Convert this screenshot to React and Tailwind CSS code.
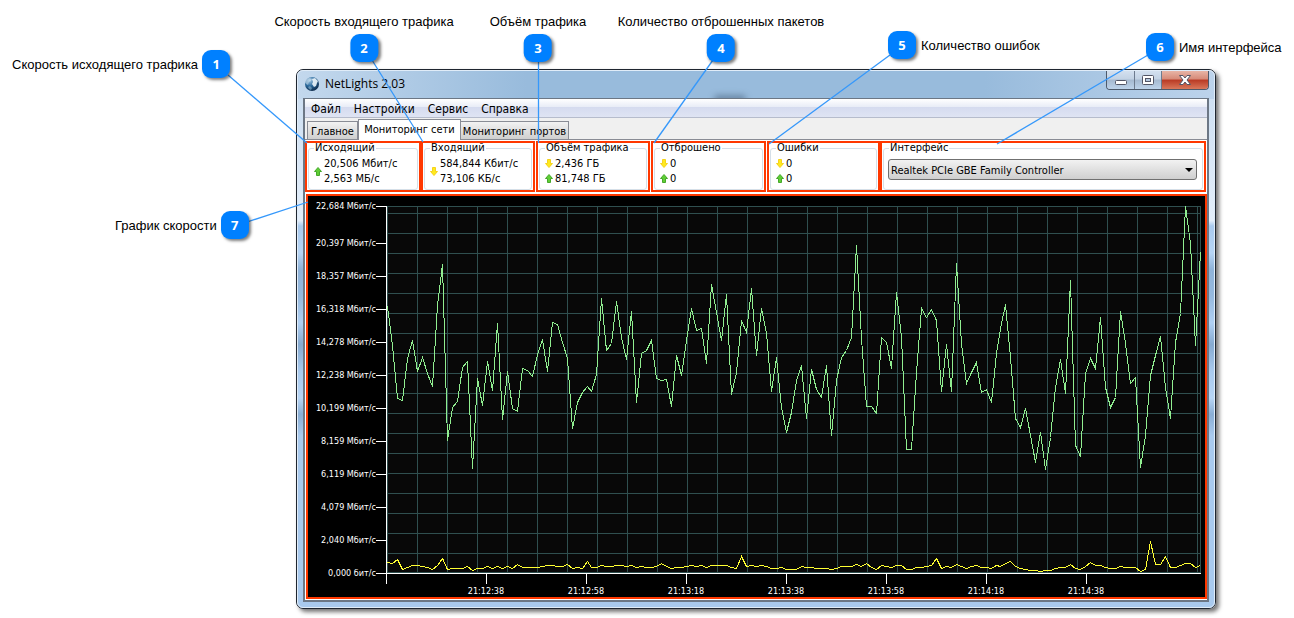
import React from "react";

const outgoing = [
  306, 345, 398, 400, 358, 340, 371, 357, 373, 386, 305, 264, 440, 407, 401, 367, 361, 468, 378, 405,
  361, 390, 323, 419, 371, 408, 411, 368, 370, 376, 354, 339, 371, 322, 324, 342, 358, 428, 402, 392,
  386, 391, 374, 298, 350, 343, 301, 337, 359, 311, 402, 353, 350, 340, 378, 380, 379, 406, 355, 375,
  340, 308, 330, 328, 363, 284, 312, 340, 294, 394, 372, 320, 332, 288, 355, 308, 333, 391, 357, 407,
  432, 412, 380, 365, 418, 369, 389, 397, 365, 435, 380, 357, 350, 337, 245, 338, 406, 406, 413, 337,
  342, 368, 292, 337, 449, 449, 372, 308, 317, 309, 320, 391, 344, 391, 263, 343, 383, 372, 362, 392,
  389, 402, 353, 328, 304, 357, 418, 427, 408, 435, 462, 432, 469, 437, 387, 359, 393, 280, 445, 456,
  373, 358, 368, 317, 387, 407, 397, 311, 343, 383, 377, 467, 435, 375, 355, 336, 387, 418, 342, 313,
  206, 243, 345, 252,
];

const incoming = [
  562, 563, 559, 569, 567, 565, 565, 566, 567, 569, 565, 558, 569, 568, 568, 568, 566, 570, 568, 568,
  566, 568, 566, 568, 566, 568, 564, 567, 567, 567, 567, 566, 565, 565, 566, 566, 564, 568, 567, 568,
  561, 567, 567, 565, 566, 566, 565, 565, 566, 565, 567, 566, 567, 567, 566, 563, 566, 568, 567, 567,
  566, 565, 566, 565, 567, 565, 565, 565, 565, 567, 568, 556, 566, 565, 566, 565, 566, 568, 568, 567,
  569, 569, 569, 566, 567, 567, 568, 568, 568, 569, 568, 566, 566, 566, 564, 566, 563, 567, 569, 565,
  566, 567, 565, 565, 569, 569, 567, 567, 566, 565, 558, 568, 566, 567, 564, 566, 568, 566, 565, 567,
  567, 568, 565, 566, 563, 561, 566, 568, 569, 570, 570, 571, 570, 570, 568, 567, 567, 564, 568, 569,
  566, 562, 565, 565, 567, 568, 568, 566, 567, 567, 567, 571, 569, 541, 564, 564, 556, 567, 567, 565,
  563, 563, 567, 565,
];

const speedTicks = [
  [206, "22,684 Мбит/с"],
  [243, "20,397 Мбит/с"],
  [276, "18,357 Мбит/с"],
  [309, "16,318 Мбит/с"],
  [342, "14,278 Мбит/с"],
  [375, "12,238 Мбит/с"],
  [408, "10,199 Мбит/с"],
  [441, "8,159 Мбит/с"],
  [474, "6,119 Мбит/с"],
  [507, "4,079 Мбит/с"],
  [540, "2,040 Мбит/с"],
  [573, "0,000 бит/с"],
];

const timeTicks = ["21:12:38", "21:12:58", "21:13:18", "21:13:38", "21:13:58", "21:14:18", "21:14:38"];

const toPoints = (values) =>
  values.map((y, i) => `${387 + Math.round((i * 813) / (values.length - 1))},${y}`).join(" ");

const Arrow = ({ up }) => (
  <svg width="8" height="9" viewBox="0 0 8 9" className={up ? "" : "rotate-180"}>
    <path
      d="M4 .5 7.5 4.5H5.5V8.5H2.5V4.5H.5Z"
      fill={up ? "#5fcf35" : "#ffea1c"}
      stroke={up ? "#46a82a" : "#f5d21c"}
      strokeWidth="1"
    />
  </svg>
);

const Globe = () => (
  <svg width="16" height="16" viewBox="0 0 16 16">
    <defs>
      <radialGradient id="globe" cx="0.35" cy="0.25" r="0.8">
        <stop offset="0" stopColor="#9fc4e0" />
        <stop offset="0.5" stopColor="#2b6a9d" />
        <stop offset="1" stopColor="#0c2746" />
      </radialGradient>
    </defs>
    <circle cx="8" cy="8" r="7" fill="url(#globe)" />
    <path d="M2 4 5 2 8 3 7 5 5 6 4 9 2 8 1 6Z" fill="#d9e9f3" opacity=".5" />
    <path d="M8 3 11 2 14 5 13 7 12 10 10 11 8 8 9 6Z" fill="#eef6fb" opacity=".9" />
    <path d="M4 11 6 10 8 12 7 14 5 13Z" fill="#8db7d3" opacity=".6" />
  </svg>
);

const Group = ({ title, className = "", children }) => (
  <div className={`border-2 border-[#ff3800] px-px ${className}`}>
    <fieldset className="h-full min-w-0 rounded-[3px] border border-[#d5dfe8] px-[5px]">
      <legend className="px-px leading-[10px]">{title}</legend>
      {children}
    </fieldset>
  </div>
);

const Speed = ({ up, bits, bytes }) => (
  <div className="flex items-center gap-[2px] pt-[3px] leading-[15px]">
    <Arrow up={up} />
    <div>
      <p>{bits}</p>
      <p>{bytes}</p>
    </div>
  </div>
);

const Counter = ({ down, up }) => (
  <div className="pt-[3px] leading-[15px]">
    <p className="flex items-center gap-[2px]">
      <Arrow /> {down}
    </p>
    <p className="flex items-center gap-[2px]">
      <Arrow up /> {up}
    </p>
  </div>
);

const Chart = () => (
  <svg viewBox="308 196 897 401" className="block w-full bg-black" shapeRendering="crispEdges">
    <rect x="387" y="206" width="814" height="367" fill="#080808" />
    <g stroke="#2f4f4f">
      {Array.from({ length: 27 }, (_, i) => (
        <line key={i} x1={417.5 + i * 30} x2={417.5 + i * 30} y1="206" y2="573" />
      ))}
      {Array.from({ length: 18 }, (_, i) => (
        <line key={i} x1="387" x2="1201" y1={213.5 + i * 20} y2={213.5 + i * 20} />
      ))}
      <rect x="387.5" y="206.5" width="813" height="366" fill="none" />
    </g>
    <g fill="none" transform="translate(.5 .5)">
      <polyline points={toPoints(outgoing)} stroke="#90ee90" />
      <polyline points={toPoints(incoming)} stroke="#ffff32" />
    </g>
    <g stroke="#fff">
      <line x1="386.5" x2="386.5" y1="206" y2="584" />
      <line x1="386" x2="1201" y1="573.5" y2="573.5" />
      {speedTicks.map(([y]) => (
        <line key={y} x1="376" x2="387" y1={y + 0.5} y2={y + 0.5} />
      ))}
      {timeTicks.map((t, i) => (
        <line key={t} x1={486.5 + i * 100} x2={486.5 + i * 100} y1="574" y2="584" />
      ))}
    </g>
    <g fill="#fff" className="text-[9px] font-['DejaVu_Sans_Condensed','DejaVu_Sans',sans-serif]">
      {speedTicks.map(([y, label]) => (
        <text key={y} x="376" y={y + 3} textAnchor="end">
          {label}
        </text>
      ))}
      {timeTicks.map((t, i) => (
        <text key={t} x={486 + i * 100} y="594" textAnchor="middle">
          {t}
        </text>
      ))}
    </g>
  </svg>
);

const Badge = ({ children }) => (
  <span className="flex size-7 shrink-0 items-center justify-center rounded-[9px] bg-[#0080ff] font-['Open_Sans',sans-serif] text-[13px] font-bold text-white shadow-[2px_2px_3px_rgba(0,0,0,0.5)]">
    {children}
  </span>
);

// callouts float freely over the window
const callouts = [
  { n: 1, text: "Скорость исходящего трафика", className: "left-3 top-[50px] flex-row-reverse gap-1" },
  { n: 2, text: "Скорость входящего трафика", className: "left-[364px] top-[14px] -translate-x-1/2 flex-col-reverse gap-[5px]" },
  { n: 3, text: "Объём трафика", className: "left-[538px] top-[14px] -translate-x-1/2 flex-col-reverse gap-[5px]" },
  { n: 4, text: "Количество отброшенных пакетов", className: "left-[721px] top-[14px] -translate-x-1/2 flex-col-reverse gap-[5px]" },
  { n: 5, text: "Количество ошибок", className: "left-[888px] top-[31px] gap-[5px]" },
  { n: 6, text: "Имя интерфейса", className: "left-[1146px] top-[33px] gap-[5px]" },
  { n: 7, text: "График скорости", className: "left-[115px] top-[211px] flex-row-reverse gap-1" },
];

const Callouts = () => (
  <div className="pointer-events-none absolute inset-0">
    <svg width="1294" height="618" className="absolute left-0 top-0" stroke="#3598fb" strokeWidth="1.3">
      <line x1="228" y1="75" x2="307" y2="143" />
      <line x1="372" y1="60" x2="423" y2="142" />
      <line x1="538.5" y1="60" x2="538.5" y2="143" />
      <line x1="713" y1="60" x2="654" y2="143" />
      <line x1="890" y1="55" x2="769" y2="144" />
      <line x1="1148" y1="55" x2="997" y2="144" />
      <line x1="247" y1="222" x2="308" y2="202" />
    </svg>
    {callouts.map(({ n, text, className }) => (
      <div
        key={n}
        className={`absolute flex items-center whitespace-nowrap text-[13px] leading-[15px] font-['Liberation_Sans',sans-serif] ${className}`}
      >
        <Badge>{n}</Badge>
        <span>{text}</span>
      </div>
    ))}
  </div>
);

const TitleBar = () => (
  <header className="relative flex h-[27px] items-start justify-between overflow-hidden">
    <div className="absolute left-[416px] top-[24px] h-2 w-8 rounded-full bg-[#3d5672]/50 blur-[3px]" />
    <div className="flex h-[26px] items-center gap-[5px] pl-[6px] text-[12px] font-['Open_Sans',sans-serif]">
      <Globe />
      <h1>NetLights 2.03</h1>
    </div>
    <div className="mr-[5px] flex h-[19px] overflow-hidden rounded-b-[4px] border border-t-0 border-[#4d5a6b]">
      <button aria-label="Свернуть" className="flex w-7 items-center justify-center border-r border-[#6d7b8e] bg-[linear-gradient(#d3e0ef,#c2d2e4_45%,#a5b9d0_50%,#bdd3ea)] pt-1">
        <svg width="12" height="5">
          <rect x=".5" y=".5" width="11" height="4" rx="1" fill="#fff" stroke="#535666" />
        </svg>
      </button>
      <button aria-label="Развернуть" className="flex w-[27px] items-center justify-center border-r border-[#6d7b8e] bg-[linear-gradient(#d3e0ef,#c2d2e4_45%,#a5b9d0_50%,#bdd3ea)]">
        <svg width="12" height="10">
          <rect x=".5" y=".5" width="11" height="9" rx="1" fill="#fff" stroke="#535666" />
          <rect x="3.5" y="3.5" width="5" height="3" fill="#b4c8de" stroke="#535666" />
        </svg>
      </button>
      <button aria-label="Закрыть" className="flex w-[46px] items-center justify-center bg-[linear-gradient(#e8b5a6,#d68a78_45%,#b93a24_50%,#d9785b)]">
        <svg width="12" height="10" viewBox="0 0 12 10">
          <path d="M.5 .5H4L6 3 8 .5H11.5L8 5 11.5 9.5H8L6 7 4 9.5H.5L4 5Z" fill="#fff" stroke="#535666" />
        </svg>
      </button>
    </div>
  </header>
);

export default function App() {
  return (
    <div className="relative min-h-screen bg-white pb-[9px] pl-[296px] pr-[78px] pt-[69px] text-black">
      <main className="rounded-[7px] border border-[#1f2630] bg-[linear-gradient(#c9dcf0,#e3eefa_28%,#a9caee_29%,#b7d5f5_34%,#8fb3d9_37%,#96b9de_42%,#b0d0f3_47%,#86aad0_51%,#a9caee_56%,#b7d5f5_61%,#8aaed4_64%,#a9caee_68%)] font-['DejaVu_Sans_Condensed','DejaVu_Sans',sans-serif] text-[11px] shadow-[3px_3px_4px_rgba(0,0,0,0.55)]">
        <div className="rounded-[6px] border border-[#e0ecf8] bg-[linear-gradient(90deg,#c3d8ed,#98bbdc_25%,#98bbdc_75%,#bcd3eb)] bg-[length:100%_28px] bg-no-repeat pb-[5px]">
          <TitleBar />
          <div className="mx-[5px] border-2 border-t border-[#6c7785] bg-white">
            <nav className="flex h-[19px] items-center gap-[13px] border-b border-[#b6bccc] bg-[linear-gradient(#fff,#e9edf7_42%,#d5dbef_46%,#dfe4f3)] pl-[6px] pt-[2px] text-[12px]">
              <a href="#file">Файл</a>
              <a href="#settings">Настройки</a>
              <a href="#service">Сервис</a>
              <a href="#help">Справка</a>
            </nav>
            <div className="flex h-[22px] items-end border-b border-[#898c95] bg-[#f0f0f0] pl-[2px]">
              <button className="h-[18px] w-[51px] border border-b-0 border-[#898c95] bg-linear-to-b from-[#f2f2f2] to-[#cfcfcf] pt-[2px]">Главное</button>
              <button className="-mb-px h-[21px] w-[103px] border border-b-0 border-[#898c95] bg-white">Мониторинг сети</button>
              <button className="h-[18px] w-[108px] border border-b-0 border-l-0 border-[#898c95] bg-linear-to-b from-[#f2f2f2] to-[#cfcfcf] pt-[2px]">Мониторинг портов</button>
            </div>
            <div className="mr-px mt-px grid h-[51px] grid-cols-[116px_115px_115px_116px_113px_1fr]">
              <Group title="Исходящий">
                <Speed up bits="20,506 Мбит/с" bytes="2,563 МБ/с" />
              </Group>
              <Group title="Входящий" className="mr-px">
                <Speed bits="584,844 Кбит/с" bytes="73,106 КБ/с" />
              </Group>
              <Group title="Объём трафика" className="mr-px">
                <Counter down="2,436 ГБ" up="81,748 ГБ" />
              </Group>
              <Group title="Отброшено" className="mr-px">
                <Counter down="0" up="0" />
              </Group>
              <Group title="Ошибки">
                <Counter down="0" up="0" />
              </Group>
              <Group title="Интерфейс">
                <div className="relative -ml-px mt-[6px]">
                  <select aria-label="Интерфейс" className="block h-[21px] w-full appearance-none rounded-[3px] border border-[#707070] bg-linear-to-b from-[#f2f2f2] to-[#cfcfcf] px-[2px] pt-px leading-[19px]">
                    <option>Realtek PCIe GBE Family Controller</option>
                  </select>
                  <svg width="8" height="4" viewBox="0 0 8 4" className="pointer-events-none absolute right-1 top-[9px]">
                    <path d="M0 0H8L4 4Z" />
                  </svg>
                </div>
              </Group>
            </div>
            <div className="mb-px ml-px mt-[2px] border-2 border-[#ff3800]">
              <Chart />
            </div>
          </div>
        </div>
      </main>
      <Callouts />
    </div>
  );
}
